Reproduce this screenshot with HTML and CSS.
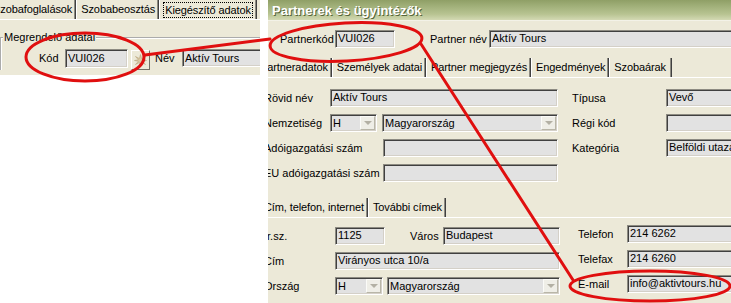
FILE: index.html
```html
<!DOCTYPE html>
<html lang="hu">
<head>
  <meta charset="UTF-8">
  <title>Partnerek és ügyintézők</title>
  <link rel="stylesheet" href="styles.css">
</head>
<body>
  <div class="desk">
    <!-- Left window: reservation, extra data tab -->
    <div class="win-left">
      <div class="tabs tabs-left">
        <span class="tab">Szobafoglalások</span>
        <span class="tab">Szobabeosztás</span>
        <span class="tab active"><span class="focus">Kiegészítő adatok</span></span>
      </div>
      <fieldset class="group">
        <legend>Megrendelő adatai</legend>
        <div class="kod-row">
          <span class="lbl l-kod">Kód</span>
          <div class="edit w-kod">VUI026</div>
          <button class="pick">
            <svg width="13" height="13" viewBox="0 0 13 13">
              <path d="M6.5 0.5 L7.6 4.6 L11.5 2.5 L8.6 5.8 L12.5 6.5 L8.6 7.3 L11.5 10.5 L7.6 8.5 L6.5 12.5 L5.4 8.5 L1.5 10.5 L4.4 7.3 L0.5 6.5 L4.4 5.8 L1.5 2.5 L5.4 4.6 Z" fill="#d9c9a6" stroke="#b8a47c" stroke-width="0.6"/>
            </svg>
          </button>
          <span class="lbl l-nev">Név</span>
          <div class="edit w-nev">Aktív Tours</div>
        </div>
      </fieldset>
    </div>

    <!-- Right window: partners -->
    <div class="win-right">
      <div class="titlebar">Partnerek és ügyintézők</div>
      <div class="inner">
        <div class="head">
          <span class="lbl l-pkod">Partnerkód</span>
          <div class="edit w-pkod">VUI026</div>
          <span class="lbl l-pnev">Partner név</span>
          <div class="edit w-pnev">Aktív Tours</div>
        </div>

        <div class="tabs tabs-main">
          <span class="tab active">Partneradatok</span>
          <span class="tab">Személyek adatai</span>
          <span class="tab">Partner megjegyzés</span>
          <span class="tab">Engedmények</span>
          <span class="tab t-last">Szobaárak</span>
        </div>

        <div class="section sec-1">
          <div class="col col-left">
            <div class="row"><span class="lbl w66">Rövid név</span><div class="edit w228">Aktív Tours</div></div>
            <div class="row">
              <span class="lbl w66">Nemzetiség</span>
              <div class="edit combo w47"><span class="val">H</span><span class="drop"></span></div>
              <div class="edit combo w176 gap5"><span class="val">Magyarország</span><span class="drop"></span></div>
            </div>
            <div class="row"><span class="lbl w119">Adóigazgatási szám</span><div class="edit w175"></div></div>
            <div class="row"><span class="lbl w119">EU adóigazgatási szám</span><div class="edit w175"></div></div>
          </div>
          <div class="col col-right">
            <div class="row"><span class="lbl w94">Típusa</span><div class="edit w90">Vevő</div></div>
            <div class="row"><span class="lbl w94">Régi kód</span><div class="edit w90"></div></div>
            <div class="row"><span class="lbl w94">Kategória</span><div class="edit w90">Belföldi utazási iroda</div></div>
          </div>
        </div>

        <div class="tabs tabs-sub">
          <span class="tab active">Cím, telefon, internet</span>
          <span class="tab">További címek</span>
        </div>

        <div class="section sec-2">
          <div class="col col-left2">
            <div class="row">
              <span class="lbl w71">Ir.sz.</span>
              <div class="edit w50">1125</div>
              <span class="lbl l-varos">Város</span>
              <div class="edit w117">Budapest</div>
            </div>
            <div class="row"><span class="lbl w71">Cím</span><div class="edit w225">Virányos utca 10/a</div></div>
            <div class="row">
              <span class="lbl w71">Ország</span>
              <div class="edit combo w48"><span class="val">H</span><span class="drop"></span></div>
              <div class="edit combo w173 gap4"><span class="val">Magyarország</span><span class="drop"></span></div>
            </div>
          </div>
          <div class="col col-right2">
            <div class="row"><span class="lbl w49">Telefon</span><div class="edit w110">214 6262</div></div>
            <div class="row"><span class="lbl w49">Telefax</span><div class="edit w110">214 6260</div></div>
            <div class="row"><span class="lbl w49">E-mail</span><div class="edit w110">info@aktivtours.hu</div></div>
          </div>
        </div>
      </div>
    </div>

    <!-- Red hand-drawn markers over both windows -->
    <svg class="marks" width="731" height="303" viewBox="0 0 731 303">
      <g fill="none" stroke="#e00f0f" stroke-width="3" stroke-linecap="round">
        <ellipse cx="85" cy="57" rx="59" ry="24"/>
        <ellipse cx="346" cy="42" rx="76" ry="19" transform="rotate(-3 346 42)"/>
        <ellipse cx="650" cy="286" rx="80" ry="15"/>
        <line x1="145" y1="55" x2="270" y2="39"/>
        <line x1="421" y1="44" x2="573" y2="280"/>
      </g>
    </svg>
  </div>
</body>
</html>
```

FILE: styles.css
```css
/* Base */
* {
  box-sizing: border-box;
}

html,
body {
  margin: 0;
  height: 100%;
  overflow: hidden;
}

body {
  background: #fff;
  font-family: "Liberation Sans", Arial, sans-serif;
  font-size: 11px;
  color: #000;
}

.desk {
  position: relative;
  display: flex;
  align-items: flex-start;
  height: 303px;
}

/* Windows */
.win-left {
  flex: none;
  width: 260px;
  height: 75px;
  background: #ece9d8;
  overflow: hidden;
}

.win-right {
  flex: 1;
  margin-left: 8px;
  height: 303px;
  background: #ece9d8;
  overflow: hidden;
}

.titlebar {
  height: 21px;
  padding-left: 4px;
  line-height: 22px;
  font-size: 13px;
  font-weight: bold;
  color: #fff;
  text-shadow: 1px 1px 0 #56653a;
  background: linear-gradient(to bottom, #8f9f66 0%, #a3b27c 35%, #b7c391 70%, #d3d9b3 100%);
  border-bottom: 1px solid #f3f2e8;
  white-space: nowrap;
}

.inner {
  margin-left: -4px;
}

/* Labels and edits */
.lbl {
  flex: none;
  display: block;
  line-height: 18px;
  white-space: nowrap;
}

.edit {
  flex: none;
  height: 18px;
  padding: 0 2px;
  line-height: 14px;
  background: #e2e2e2;
  border: 1px solid;
  border-color: #8d8b82 #fff #fff #8d8b82;
  box-shadow: inset 1px 1px 0 #404040, inset -1px -1px 0 #d4d0c8;
  white-space: nowrap;
  overflow: hidden;
}

.combo {
  display: flex;
  padding-right: 1px;
}

.combo .val {
  flex: 1;
  padding-top: 1px;
}

.combo .drop {
  flex: none;
  position: relative;
  width: 15px;
  height: 14px;
  margin-top: 1px;
  background: #efeee7;
  border: 1px solid;
  border-color: #fbfbf8 #b9b6a8 #b9b6a8 #fbfbf8;
}

.combo .drop::after {
  content: "";
  position: absolute;
  left: 3px;
  top: 4px;
  border-left: 4px solid transparent;
  border-right: 4px solid transparent;
  border-top: 4px solid #b3b0a4;
}

/* Tabs */
.tabs {
  display: flex;
  height: 20px;
  border-bottom: 1px solid #fff;
  letter-spacing: -0.1px;
}

.tab {
  height: 19px;
  padding: 0 3px 0 4px;
  line-height: 19px;
  border-left: 1px solid #fff;
  border-right: 1px solid #404040;
  box-shadow: inset -1px 0 0 #8d8b82;
  white-space: nowrap;
}

.tabs-main {
  margin-left: -9px;
}

.tabs-main .t-last {
  padding-right: 5px;
}

.tabs-sub {
  margin-left: -5px;
}

.tabs-left {
  margin-left: -12px;
}

.tabs-left .tab.active {
  padding: 2px 3px 0 3px;
  line-height: 14px;
}

.focus {
  display: block;
  padding: 0 1px;
  border: 1px dotted #000;
}

/* Left window group */
.group {
  margin: 11px 0 0 0;
  width: 266px;
  padding: 5px 0 0 0;
  border: 2px groove #fff;
  border-right: none;
  border-bottom: none;
}

.group legend {
  margin-left: 1px;
  padding: 0 1px;
  line-height: 13px;
}

.kod-row {
  display: flex;
  align-items: flex-start;
}

.l-kod {
  width: 26px;
  margin-left: 37px;
  line-height: 19px;
}

.w-kod {
  width: 63px;
  height: 19px;
  line-height: 16px;
}

.pick {
  flex: none;
  width: 19px;
  height: 20px;
  margin: 1px 0 0 3px;
  padding: 0;
  background: #ece9d8;
  border: 1px solid;
  border-color: #fff #716f64 #716f64 #fff;
  display: flex;
  align-items: center;
  justify-content: center;
}

.l-nev {
  width: 27px;
  margin-left: 5px;
  line-height: 19px;
}

.w-nev {
  width: 80px;
  line-height: 16px;
}

/* Right window header row */
.head {
  display: flex;
  height: 37px;
  padding: 9px 0 0 16px;
}

.l-pkod {
  width: 55px;
}

.w-pkod {
  width: 60px;
}

.l-pnev {
  width: 59px;
  margin-left: 35px;
}

.w-pnev {
  width: 260px;
}

/* Sections */
.section {
  display: flex;
  align-items: flex-start;
}

.sec-1 {
  padding: 11px 0 16px 0;
}

.sec-2 {
  padding-top: 9px;
}

.col {
  display: flex;
  flex-direction: column;
  gap: 7px;
  flex: none;
}

.col-left {
  width: 294px;
}

.col-right {
  margin-left: 14px;
}

.col-left2 {
  width: 296px;
}

.col-right2 {
  margin-left: 18px;
  margin-top: -2px;
}

.row {
  display: flex;
  height: 18px;
}

.gap5 {
  margin-left: 5px;
}

.gap4 {
  margin-left: 4px;
}

.l-varos {
  width: 33px;
  margin-left: 25px;
}

.w47 { width: 47px; }
.w48 { width: 48px; }
.w49 { width: 49px; }
.w50 { width: 50px; }
.w66 { width: 66px; }
.w71 { width: 71px; }
.w90 { width: 90px; }
.w94 { width: 94px; }
.w110 { width: 110px; }
.w117 { width: 117px; }
.w119 { width: 119px; }
.w173 { width: 173px; }
.w175 { width: 175px; }
.w176 { width: 176px; }
.w225 { width: 225px; }
.w228 { width: 228px; }

/* Marker overlay */
.marks {
  position: absolute;
  left: 0;
  top: 0;
  pointer-events: none;
}
```
